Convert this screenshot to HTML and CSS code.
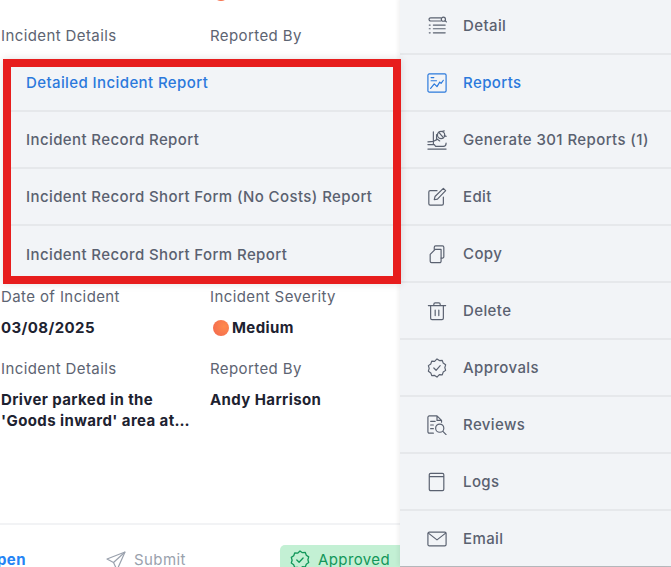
FILE: index.html
```html
<!doctype html>
<html>
    <head>
        <meta charset="UTF-8">
        <title>Incident actions</title>
        <link rel="stylesheet" href="styles.css">
    </head>
    <body>
        <div class="page">
            <div class="card">
                <div class="fields first">
                    <div class="value">03/08/2025</div>
                    <div class="value"><span class="dot"></span>Medium</div>
                    <div class="label">Incident Details</div>
                    <div class="label">Reported By</div>
                </div>
                <div class="fields second">
                    <div class="field">
                        <div class="label">Date of Incident</div>
                        <div class="value">03/08/2025</div>
                    </div>
                    <div class="field">
                        <div class="label">Incident Severity</div>
                        <div class="value"><span class="dot"></span>Medium</div>
                    </div>
                    <div class="field">
                        <div class="label">Incident Details</div>
                        <div class="value">Driver parked in the<br>'Goods inward' area at…</div>
                    </div>
                    <div class="field">
                        <div class="label">Reported By</div>
                        <div class="value">Andy Harrison</div>
                    </div>
                </div>
                <div class="footer">
                    <span class="open">Open</span>
                    <span class="submit">
                        <svg width="20" height="20" viewBox="0 0 20 20" fill="none" stroke="#9aa1ad" stroke-width="1.2" stroke-linejoin="round"><path d="M19 1 1 8l6.500 3.500L11 19z"/><path d="M19 1 7.500 11.500"/></svg>
                        Submit
                    </span>
                    <span class="approved">
                        <svg width="20" height="20" viewBox="0 0 20 20" fill="none" stroke="#12975a" stroke-width="1.3" stroke-linejoin="round" stroke-linecap="round"><path d="M10 1l2.400 1.700 2.900-.2 1 2.700 2.400 1.700-.8 2.800.8 2.800-2.400 1.700-1 2.700-2.900-.2L10 19l-2.400-1.700-2.900.2-1-2.700L1.300 13l.8-2.800-.8-2.800 2.400-1.700 1-2.700 2.900.2z"/><path d="M6.800 10l2.300 2.300 4-4.300"/></svg>
                        Approved
                    </span>
                </div>
            </div>

            <div class="sidebar">
                <div class="side-item">
                    <svg class="icon" viewBox="0 0 22 22"><path d="M4 2h11M4 5.500h11M4 2a1.750 1.750 0 0 0 0 3.500M7 10h13M7 14h13M7 18.500h13M2.500 10h1M2.500 14h1M2.500 18.500h1"/><circle cx="18" cy="3.500" r="2.300"/><path d="M20 5.200l1.300 1.300"/></svg>
                    Detail
                </div>
                <div class="side-item active">
                    <svg class="icon" viewBox="0 0 22 22"><rect x="1" y="1" width="20" height="20" rx="1.500"/><path d="M4.500 5h3M4.500 8.500h6M4 17l4-5 3 3 3-5 1.500 1.500L18 8"/></svg>
                    Reports
                </div>
                <div class="side-item">
                    <svg class="icon" viewBox="0 0 22 22"><path d="M1 21h20M1 16h7l1.500 2H18c2.500 0 3-1.500 3-3.500M7 2v13M10.500 5v6M1 13c4 0 8-.5 10-3l3 2"/><circle cx="15.500" cy="5.500" r="4"/><path d="M13 2.500l5 6M17 1.500l2-.5M19 6l2 1"/></svg>
                    Generate 301 Reports (1)
                </div>
                <div class="side-item">
                    <svg class="icon" viewBox="0 0 22 22"><path d="M11 4H3.500A1.500 1.500 0 0 0 2 5.500v13A1.500 1.500 0 0 0 3.500 20h13a1.500 1.500 0 0 0 1.500-1.500V11"/><path d="M8 14l.8-3.500L18 1.500l2.500 2.500-9 9.300z"/></svg>
                    Edit
                </div>
                <div class="side-item">
                    <svg class="icon" viewBox="0 0 22 22"><path d="M8 6V3.500A1.500 1.500 0 0 1 9.500 2H17a1.500 1.500 0 0 1 1.500 1.500V14a1.500 1.500 0 0 1-1.500 1.500h-1.500"/><path d="M9 6H15.500v13a1.500 1.500 0 0 1-1.500 1.500H5A1.500 1.500 0 0 1 3.500 19V11.500z"/></svg>
                    Copy
                </div>
                <div class="side-item">
                    <svg class="icon" viewBox="0 0 22 22"><path d="M1.500 5h19M7.500 5V3.500A1.500 1.500 0 0 1 9 2h4a1.500 1.500 0 0 1 1.500 1.500V5M4 5v14a1.500 1.500 0 0 0 1.500 1.500h11A1.500 1.500 0 0 0 18 19V5M9 10v6M13 10v6"/></svg>
                    Delete
                </div>
                <div class="side-item">
                    <svg class="icon" viewBox="0 0 22 22"><path d="M11 1l2.600 1.800 3.200-.2 1 3 2.700 1.900-.9 3.100.9 3-2.700 1.900-1 3-3.200-.2L11 21l-2.600-1.800-3.200.2-1-3-2.700-1.900.9-3-.9-3.100 2.700-1.900 1-3 3.200.2z"/><path d="M7.500 11l2.500 2.500 4.500-5"/></svg>
                    Approvals
                </div>
                <div class="side-item">
                    <svg class="icon" viewBox="0 0 22 22"><path d="M7 20H2.500A1.500 1.500 0 0 1 1 18.500v-16A1.500 1.500 0 0 1 2.500 1H11l5 5v2M11 1v5h5M4 7h5M4 11h3M4 15h3"/><circle cx="14" cy="14.500" r="4.500"/><path d="M17.500 18l3.500 3.500"/></svg>
                    Reviews
                </div>
                <div class="side-item">
                    <svg class="icon" viewBox="0 0 22 22"><path d="M4 1.500h13a1.500 1.500 0 0 1 1.500 1.500v16a1.500 1.500 0 0 1-1.500 1.500H4A1.500 1.500 0 0 1 2.500 19V3A1.500 1.500 0 0 1 4 1.500zM2.500 5h16"/></svg>
                    Logs
                </div>
                <div class="side-item">
                    <svg class="icon" viewBox="0 0 22 22"><rect x="1" y="3.500" width="20" height="15" rx="1.500"/><path d="M1.500 4.500 11 12l9.500-7.500"/></svg>
                    Email
                </div>
            </div>

            <div class="report-menu">
                <div class="report-item active">Detailed Incident Report</div>
                <div class="report-item">Incident Record Report</div>
                <div class="report-item">Incident Record Short Form (No Costs) Report</div>
                <div class="report-item">Incident Record Short Form Report</div>
            </div>
        </div>
    </body>
</html>
```

FILE: styles.css
```css
*{
    margin: 0;
    padding: 0;
    box-sizing: border-box;
}
html,body{
    height: 100%;
    overflow: hidden;
    background: #fff;
}
body{
    font-family: Inter, "Liberation Sans", sans-serif;
    font-size: 15px;
    letter-spacing: .4px;
}
.page{
    position: relative;
    display: flex;
    width: 671px;
    height: 567px;
    overflow: hidden;
}
.card{
    width: 400px;
    height: 567px;
    flex: none;
    display: flex;
    flex-direction: column;
}
.fields{
    display: grid;
    grid-template-columns: 209px 190px;
    padding-left: 1px;
}
.fields.first{
    margin-top: -18px;
    row-gap: 24px;
}
.fields.first .value{
    margin-top: 0;
}
.fields.second{
    padding-top: 243px;
    row-gap: 22px;
}
.label{
    color: #5d6472;
    line-height: 18px;
}
.value{
    margin-top: 11px;
    color: #1d2230;
    font-weight: 700;
    line-height: 21px;
}
.dot{
    display: inline-block;
    width: 16px;
    height: 16px;
    margin: 0 3px 0 3px;
    border-radius: 50%;
    vertical-align: -3px;
    background: radial-gradient(circle at 70% 40%, #ff8a4c, #f2664f);
}
.footer{
    margin-top: auto;
    height: 44px;
    border-top: 2px solid #f2f3f5;
    display: flex;
    align-items: flex-start;
    padding-top: 25px;
}
.open{
    flex: none;
    width: 121px;
    margin-left: -15px;
    color: #2584f5;
    font-weight: 700;
    line-height: 20px;
}
.submit{
    flex: none;
    width: 174px;
    display: flex;
    gap: 8px;
    color: #9aa1ad;
    line-height: 20px;
}
.submit svg{
    margin-top: 1px;
}
.approved{
    display: flex;
    gap: 8px;
    width: 154px;
    height: 40px;
    margin-top: -5px;
    padding: 5px 0 0 10px;
    border-radius: 5px 0 0 0;
    background: #c3f0d4;
    color: #12975a;
    line-height: 20px;
    flex: none;
}
.sidebar{
    position: relative;
    z-index: 1;
    flex: none;
    width: 271px;
    height: 568px;
    margin-top: -2px;
    background: #f2f4f7;
    box-shadow: -2px 0 4px rgba(0,0,0,0.06), 0 1px 0 #b9bcc0;
}
.side-item{
    display: flex;
    align-items: center;
    gap: 16px;
    height: 57px;
    padding-left: 27px;
    border-bottom: 2px solid #e6e8eb;
    color: #5a6170;
    font-weight: 500;
}
.side-item:last-child{
    border-bottom-color: transparent;
}
.side-item.active{
    color: #2b79dc;
}
.icon{
    width: 20px;
    height: 20px;
    flex: none;
    fill: none;
    stroke: currentColor;
    stroke-width: 1.3;
    stroke-linecap: round;
    stroke-linejoin: round;
}
.report-menu{
    position: absolute;   /*sits over the card*/
    left: 3px;
    top: 59px;
    z-index: 2;
    width: 398px;
    border: 8px solid #e71d1d;
    background: #f2f4f7;
    box-shadow: 0 0 8px rgba(0,0,0,0.12);
}
.report-item{
    display: flex;
    align-items: center;
    height: 57px;
    padding-left: 15px;
    border-bottom: 2px solid #e6e8eb;
    color: #5a6170;
    font-weight: 500;
}
.report-item:first-child{
    height: 45px;
    padding-bottom: 12px;
}
.report-item:last-child{
    height: 50px;
    padding-top: 6px;
    border-bottom: 0;
}
.report-item.active{
    color: #2b79dc;
}
```
